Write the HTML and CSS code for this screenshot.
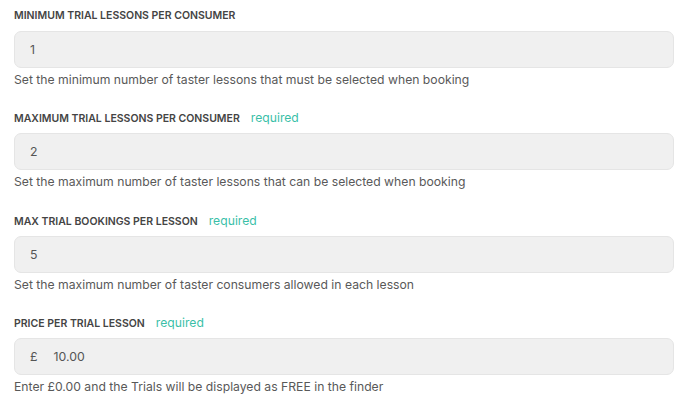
FILE: index.html
```html
<!DOCTYPE html>
<html lang="en">
<head>
    <meta charset="UTF-8">
    <title>Trial settings</title>
    <link rel="stylesheet" href="styles.css">
</head>
<body>
    <div class="form">
        <div class="field">
            <div class="label">Minimum trial lessons per consumer</div>
            <div class="input"><span class="value">1</span></div>
            <div class="help">Set the minimum number of taster lessons that must be selected when booking</div>
        </div>

        <div class="field">
            <div class="label">Maximum trial lessons per consumer <span class="req">required</span></div>
            <div class="input"><span class="value">2</span></div>
            <div class="help">Set the maximum number of taster lessons that can be selected when booking</div>
        </div>

        <div class="field">
            <div class="label">Max trial bookings per lesson <span class="req">required</span></div>
            <div class="input"><span class="value">5</span></div>
            <div class="help">Set the maximum number of taster consumers allowed in each lesson</div>
        </div>

        <div class="field">
            <div class="label">Price per trial lesson <span class="req">required</span></div>
            <div class="input"><span class="prefix">£</span><span class="value">10.00</span></div>
            <div class="help">Enter £0.00 and the Trials will be displayed as FREE in the finder</div>
        </div>
    </div>
</body>
</html>
```

FILE: styles.css
```css
body { margin: 0; background: #fff; font-family: Inter, "Noto Sans", sans-serif; }
.form { padding: 8px 14px 0 14px; }
.field { margin-bottom: 21.4px; }
.label { height: 16px; display: flex; align-items: baseline; font-size: 10.5px; font-weight: 600; line-height: 16px; color: #444; text-transform: uppercase; }
.req { text-transform: none; font-weight: 400; font-size: 12.2px; color: #3bbfa8; margin-left: 11px; }
.input { margin-top: 7px; height: 37px; box-sizing: border-box; background: #f0f0f0; border: 1px solid #e5e5e5; border-radius: 7px; padding: 0 15px; display: flex; align-items: center; font-size: 12.3px; color: #555; }
.prefix { margin-right: 16px; }
.help { margin-top: 3px; font-size: 12.2px; line-height: 18px; color: #595959; }
```
